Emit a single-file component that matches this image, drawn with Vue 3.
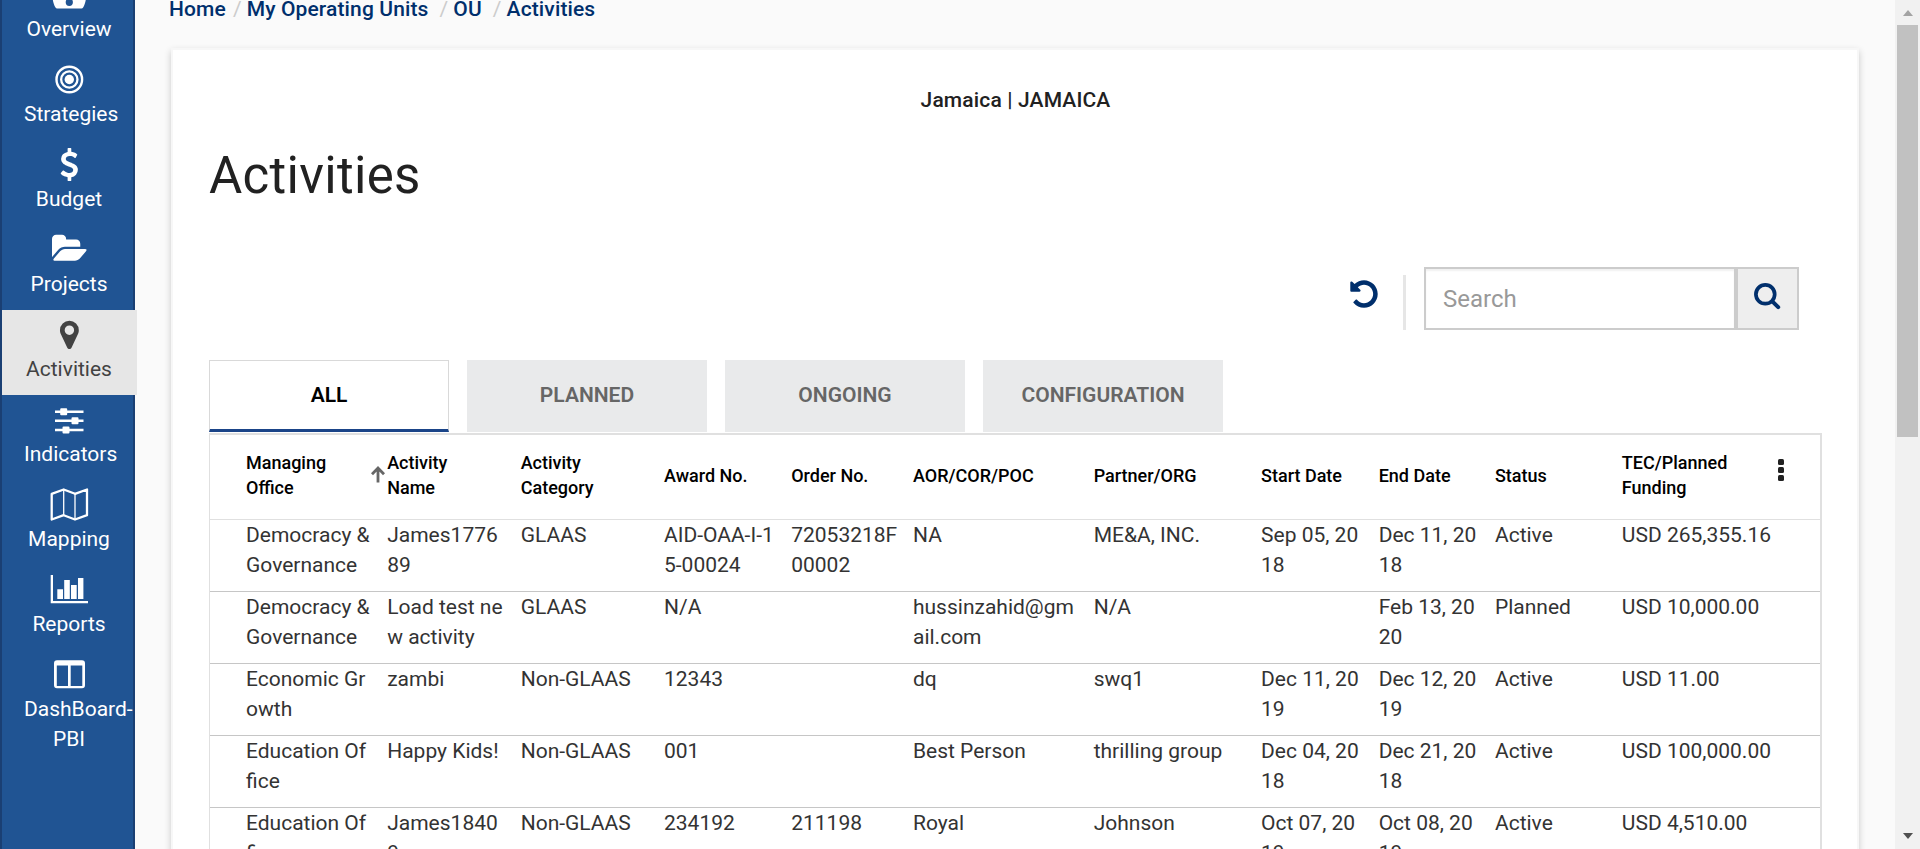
<script setup>
const navItems = [
  { label: 'Overview', icon: 'gauge' },
  { label: 'Strategies', icon: 'target' },
  { label: 'Budget', icon: 'dollar' },
  { label: 'Projects', icon: 'folder' },
  { label: 'Activities', icon: 'pin', active: true },
  { label: 'Indicators', icon: 'sliders' },
  { label: 'Mapping', icon: 'map' },
  { label: 'Reports', icon: 'chart' },
  { label: 'DashBoard-\nPBI', icon: 'columns' },
]

const tabs = ['ALL', 'PLANNED', 'ONGOING', 'CONFIGURATION']

const columns = [
  'Managing\nOffice', 'Activity\nName', 'Activity\nCategory', 'Award No.', 'Order No.',
  'AOR/COR/POC', 'Partner/ORG', 'Start Date', 'End Date', 'Status', 'TEC/Planned\nFunding',
]

const activities = [
  ['Democracy &\nGovernance', 'James1776\n89', 'GLAAS', 'AID-OAA-I-1\n5-00024', '72053218F\n00002', 'NA', 'ME&A, INC.', 'Sep 05, 20\n18', 'Dec 11, 20\n18', 'Active', 'USD 265,355.16'],
  ['Democracy &\nGovernance', 'Load test ne\nw activity', 'GLAAS', 'N/A', '', 'hussinzahid@gm\nail.com', 'N/A', '', 'Feb 13, 20\n20', 'Planned', 'USD 10,000.00'],
  ['Economic Gr\nowth', 'zambi', 'Non-GLAAS', '12343', '', 'dq', 'swq1', 'Dec 11, 20\n19', 'Dec 12, 20\n19', 'Active', 'USD 11.00'],
  ['Education Of\nfice', 'Happy Kids!', 'Non-GLAAS', '001', '', 'Best Person', 'thrilling group', 'Dec 04, 20\n18', 'Dec 21, 20\n18', 'Active', 'USD 100,000.00'],
  ['Education Of\nfice', 'James1840\n9', 'Non-GLAAS', '234192', '211198', 'Royal', 'Johnson', 'Oct 07, 20\n19', 'Oct 08, 20\n19', 'Active', 'USD 4,510.00'],
]
</script>

<template>
  <div class="page">
    <nav class="sidebar">
      <a v-for="item in navItems" :key="item.label" class="nav-item" :class="{ active: item.active }">
        <svg class="nav-icon" viewBox="0 0 40 33" fill="currentColor">
          <template v-if="item.icon === 'gauge'">
            <path fill-rule="evenodd" d="M20.3 2A16.7 16.7 0 0 0 3.6 18.7C3.6 23 4.8 26.600 6.500 29.600Q7.100 30.500 8.100 30.500H32.500Q33.500 30.500 34.100 29.600C35.800 26.600 37 23 37 18.700A16.700 16.700 0 0 0 20.300 2ZM20.300 20.700A3.600 3.600 0 1 1 20.300 27.900A3.600 3.600 0 1 1 20.300 20.700Z" />
          </template>
          <template v-else-if="item.icon === 'target'">
            <circle cx="20.300" cy="16.500" r="12.800" fill="none" stroke="currentColor" stroke-width="2.400" />
            <circle cx="20.300" cy="16.500" r="8.150" fill="none" stroke="currentColor" stroke-width="2.300" />
            <circle cx="20.300" cy="16.500" r="4.700" />
          </template>
          <path v-else-if="item.icon === 'dollar'" transform="translate(3.800 0) scale(.0184)" d="M1362 1185q0 153-99.500 263.500t-258.500 136.500v175q0 14-9 23t-23 9h-135q-13 0-22.500-9.500t-9.500-22.500v-175q-66-9-127.500-31t-101.500-44.500-74-48-46.500-37.500-17.500-18q-17-21-2-41l103-135q7-10 23-12 15-2 24 9l2 2q113 99 243 125 37 8 74 8 81 0 142.500-43t61.500-122q0-28-15-53t-33.500-42-58.500-37.500-66-32-80-32.500q-39-16-61.500-25t-61.500-26.500-62.500-31-56.500-35.500-53.500-42.500-43.500-49-35.500-58-21-66.500-8.500-78q0-138 98-242t255-134v-180q0-13 9.500-22.500t22.500-9.500h135q14 0 23 9t9 23v176q57 6 110.500 23t87 33.500 63.500 37.500 39 29 15 14q17 18 5 38l-81 146q-8 15-23 16-14 3-27-7-3-3-14.500-12t-39-26.500-58.500-32-74.500-26-85.500-11.500q-95 0-155 43t-60 111q0 26 8.500 48t29.500 41.500 39.500 33 56 31 60.500 27 70 27.500q53 20 81 31.500t76 35 75.500 42.500 62 50 53 63.500 31.500 76.500 13 94z" />
          <path v-else-if="item.icon === 'folder'" transform="translate(3 -.500) scale(.0184)" d="M1879 952q0 31-31 66l-336 396q-43 51-120.500 86.500t-143.500 35.500h-1088q-34 0-60.500-13t-26.500-43q0-31 31-66l336-396q43-51 120.500-86.500t143.500-35.500h1088q34 0 60.500 13t26.500 43zm-343-344v160h-832q-94 0-197 47.500t-164 119.500l-337 396-5 6q0-4-.5-12.500t-.5-12.500v-960q0-92 66-158t158-66h320q92 0 158 66t66 158v32h544q92 0 158 66t66 158z" />
          <path v-else-if="item.icon === 'pin'" transform="translate(3.900 .400) scale(.0184)" d="M1152 640q0-106-75-181t-181-75-181 75-75 181 75 181 181 75 181-75 75-181zm256 0q0 109-33 179l-364 774q-16 33-47.500 52t-67.500 19-67.500-19-46.500-52l-365-774q-33-70-33-179 0-212 150-362t362-150 362 150 150 362z" />
          <path v-else-if="item.icon === 'sliders'" d="M6 7.500H34.500V10H6ZM6 16.500H34.500V19H6ZM6 25.700H34.500V28.200H6ZM12.200 5.200H17.200Q18.200 5.200 18.200 6.200V11.200Q18.200 12.200 17.200 12.200H12.200Q11.200 12.200 11.200 11.200V6.200Q11.200 5.200 12.200 5.200ZM23.500 14.200H28.500Q29.500 14.200 29.500 15.200V20.200Q29.500 21.200 28.500 21.200H23.500Q22.500 21.200 22.500 20.200V15.200Q22.500 14.200 23.500 14.200ZM14.500 23.500H19.500Q20.500 23.500 20.500 24.500V29.500Q20.500 30.500 19.500 30.500H14.500Q13.500 30.500 13.500 29.500V24.500Q13.500 23.500 14.500 23.500Z" />
          <template v-else-if="item.icon === 'map'">
            <path fill="none" stroke="currentColor" stroke-width="2.300" stroke-linejoin="round" d="M2.700 5.800 14.700 1.500 26 5.800 38 1.500V27.200L26 31.500 14.700 27.200 2.700 31.500Z" />
            <path fill="none" stroke="currentColor" stroke-width="1.300" d="M14.700 1.500V27.200M26 5.800V31.500" />
          </template>
          <path v-else-if="item.icon === 'chart'" d="M1.700 2H4V28H39V30.300H1.700ZM8.300 16.300H14V26H8.300ZM15.200 7H20.800V26H15.200ZM22 12H27.700V26H22ZM29 5H34.400V26H29Z" />
          <path v-else fill-rule="evenodd" d="M8 2.300H33Q36 2.300 36 5.300V27.300Q36 30.300 33 30.300H8Q5 30.300 5 27.300V5.300Q5 2.300 8 2.300ZM7.800 7.600V28H19V7.600ZM21.700 7.600V28H33.300V7.600Z" />
        </svg>
        <span class="nav-label">{{ item.label }}</span>
      </a>
    </nav>

    <main class="main">
      <div class="breadcrumb">
        <a>Home</a><i class="near">/</i><a>My Operating Units</a><i>/</i><a>OU</a><i>/</i><a>Activities</a>
      </div>
      <section class="card">
        <div class="unit">Jamaica | JAMAICA</div>
        <h1>Activities</h1>
        <div class="toolbar">
          <svg class="undo" viewBox="0 0 1792 1792" fill="currentColor">
            <path d="M1664 896q0 156-61 298t-164 245-245 164-298 61q-172 0-327-72.500t-264-204.500q-7-10-6.500-22.500t8.500-20.500l137-138q10-9 25-9 16 2 23 12 73 95 179 147t225 52q104 0 198.500-40.500t163.500-109.500 109.500-163.500 40.500-198.500-40.500-198.500-109.500-163.500-163.500-109.500-198.500-40.500q-98 0-188 35.500t-160 101.500l137 138q31 30 14 69-17 40-59 40h-448q-26 0-45-19t-19-45v-448q0-42 40-59 39-17 69 14l130 129q107-101 244.500-156.500t284.500-55.500q156 0 298 61t245 164 164 245 61 298z" />
          </svg>
          <div class="divider"></div>
          <div class="search">
            <div class="field">Search</div>
            <button class="search-btn" aria-label="Search">
              <svg viewBox="0 0 28 28" fill="none" stroke="currentColor">
                <circle cx="12.300" cy="12.300" r="9.400" stroke-width="3.700" />
                <path d="M19.300 19.300 25.200 25.200" stroke-width="4" stroke-linecap="round" />
              </svg>
            </button>
          </div>
        </div>
        <div class="tabs">
          <div v-for="(tab, i) in tabs" :key="tab" class="tab" :class="{ selected: i === 0 }">{{ tab }}</div>
        </div>
        <div class="table">
          <div class="row head">
            <div v-for="(col, i) in columns" :key="col" class="cell">
              {{ col }}
              <svg v-if="i === 0" class="sort" viewBox="0 0 14 17" fill="none" stroke="#666" stroke-width="2.800">
                <path d="M7 16.500V2M1 8.300 7 2.100 13 8.300" />
              </svg>
            </div>
            <div class="menu"><b></b><b></b><b></b></div>
          </div>
          <div v-for="(row, r) in activities" :key="r" class="row body">
            <div v-for="(value, c) in row" :key="c" class="cell">{{ value }}</div>
          </div>
        </div>
      </section>
    </main>

    <div class="scrollbar">
      <span class="up"></span>
      <span class="thumb"></span>
      <span class="down"></span>
    </div>
  </div>
</template>

<style>
body { margin: 0; overflow: hidden; }
</style>

<style scoped>
.page {
  display: flex;
  width: 1920px;
  height: 849px;
  overflow: hidden;
  background: #fafafa;
  font: 400 21px/30px Roboto, "Liberation Sans", sans-serif;
  color: #212121;
}
.page * { box-sizing: border-box; }

.sidebar {
  flex: none;
  width: 135px;
  height: 849px;
  border: solid #1a3f73;
  border-width: 0 2px;
  background: #205493;
  color: #fff;
}
.nav-item {
  display: flex;
  flex-direction: column;
  width: 135px;
  min-height: 85px;
  padding: 8px 23px 11px 22px;
}
.nav-item:first-child { margin-top: -30px; }
.nav-item.active { background: #e6e6e6; color: #424242; }
.nav-icon { width: 40px; height: 33px; margin: 0 0 3px 25px; overflow: visible; }
.nav-label { display: block; text-align: center; white-space: pre; }

.main { flex: none; width: 1760px; padding-left: 36px; }
.breadcrumb {
  display: flex;
  height: 30px;
  margin-top: -6px;
  font-weight: 500;
  letter-spacing: .13px;
  color: #002f6c;
}
.breadcrumb a:first-child { margin-left: -2px; }
.breadcrumb i { font-style: normal; font-weight: 400; color: #ccc; margin: 0 5px 0 11px; }
.breadcrumb i.near { margin-left: 7px; }

.card {
  width: 1688px;
  height: 900px;
  margin-top: 24px;
  padding: 35px 35px 0 36px;
  border: 2px solid #f7f7f7;
  background: #fff;
  background-clip: padding-box;
  box-shadow: 0 3px 7px rgba(0, 0, 0, .2);
}
.unit { text-align: center; font-weight: 500; letter-spacing: .15px; }
h1 {
  margin: 31px 0 0;
  font-size: 51px;
  line-height: 60px;
  font-weight: 400;
  letter-spacing: .3px;
}
.toolbar {
  display: flex;
  align-items: flex-start;
  justify-content: flex-end;
  height: 63px;
  margin: 61px 23px 0 0;
}
.undo { width: 32px; height: 32px; margin: 11px 23px 0 0; color: #002f6c; }
.divider { width: 3px; height: 55px; margin: 8px 18px 0 0; background: #e6e6e6; }
.search { display: flex; width: 375px; height: 63px; border: 2px solid #ccc; }
.field {
  flex: 1;
  padding: 1px 0 0 17px;
  font-size: 24px;
  line-height: 58px;
  color: #999;
  box-shadow: inset 0 2px 2px rgba(0, 0, 0, .06);
}
.search-btn {
  display: flex;
  align-items: flex-start;
  width: 63px;
  padding: 13px 0 0 16px;
  border: 0;
  border-left: 4px solid #ccc;
  background: #eee;
  color: #002f6c;
}
.search-btn svg { display: block; flex: none; width: 28px; height: 28px; margin-left: -1px; }

.tabs { display: flex; gap: 18px; height: 72px; margin-top: 30px; }
.tab {
  width: 240px;
  height: 72px;
  line-height: 71px;
  text-align: center;
  font-weight: 600;
  color: #666;
  background: #e9eaeb;
}
.tab.selected {
  border: 1px solid #d9d9d9;
  border-bottom: 3px solid #1a4488;
  line-height: 69px;
  background: #fff;
  color: #000;
}

.table {
  border: solid #e0e0e0;
  border-width: 2px 2px 0 1px;
  margin-top: 1px;
}
.row {
  display: grid;
  grid-template-columns: 141.200px 133.500px 143.300px 127.200px 121.800px 180.700px 167.400px 117.600px 116.300px 126.900px 156.500px 12px;
  padding-left: 36px;
}
.head {
  position: relative;
  height: 85px;
  align-items: center;
  border-bottom: 1px solid #e0e0e0;
  font-size: 18px;
  line-height: 25px;
  font-weight: 500;
  color: #000;
}
.body { height: 72px; border-bottom: 1px solid #c6c6c6; color: #333; }
.cell { white-space: pre-line; }
.head .cell { position: relative; padding-bottom: 4px; }
.sort { position: absolute; left: 125px; top: 16px; width: 14px; height: 17px; }
.menu { display: flex; flex-direction: column; gap: 2px; height: 22px; margin-bottom: 14px; }
.menu b { display: block; width: 6px; height: 6px; border-radius: 1.500px; background: #212121; }

.scrollbar {
  display: flex;
  flex-direction: column;
  align-items: center;
  width: 25px;
  height: 849px;
  padding: 10px 0;
  background: #f1f1f1;
}
.up, .down { width: 0; height: 0; border: solid transparent; }
.up { border-width: 0 5.500px 6px; border-bottom-color: #a3a3a3; margin-bottom: 9px; }
.thumb { width: 21px; height: 412px; background: #c1c1c1; }
.down { border-width: 6px 5.500px 0; border-top-color: #505050; margin-top: auto; }
</style>
